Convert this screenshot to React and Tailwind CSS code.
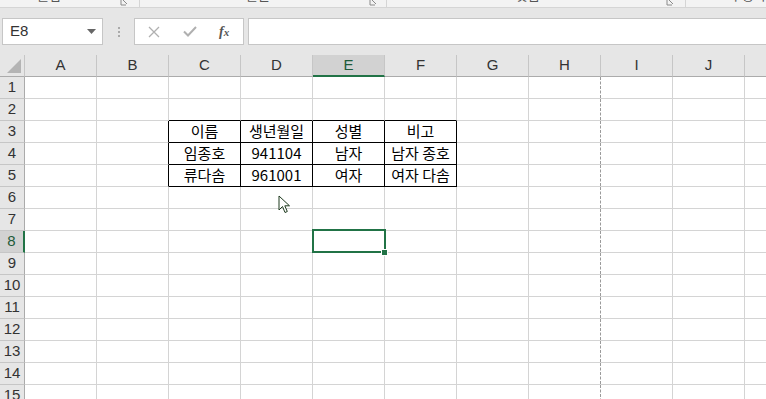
import React from "react";

const COLS = ["A", "B", "C", "D", "E", "F", "G", "H", "I", "J", "K"];
const ROWS = Array.from({ length: 15 }, (_, i) => i + 1);

const DATA = {
  3: { C: "이름", D: "생년월일", E: "성별", F: "비고" },
  4: { C: "임종호", D: "941104", E: "남자", F: "남자 종호" },
  5: { C: "류다솜", D: "961001", E: "여자", F: "여자 다솜" },
};

const TABLE_COLS = ["C", "D", "E", "F"];

const cellBorder = (col, row) => {
  const inTable = TABLE_COLS.includes(col) && row >= 3 && row <= 5;
  const right =
    col === "H"
      ? "border-r-0"
      : inTable || (col === "B" && row >= 3 && row <= 5)
      ? "border-r border-r-black"
      : "border-r border-r-[#d4d4d4]";
  const bottom =
    inTable || (TABLE_COLS.includes(col) && row === 2)
      ? "border-b-black"
      : "border-b-[#d4d4d4]";
  return `${right} ${bottom}`;
};

const Launcher = () => (
  <svg width="9" height="7" viewBox="0 0 9 7" className="shrink-0">
    <path d="M1 0v5h5" stroke="#8a8a8a" strokeWidth="1" fill="none" />
    <path d="M3 0l4 4" stroke="#8a8a8a" strokeWidth="1" />
  </svg>
);

const Cursor = () => (
  <svg
    width="14"
    height="20"
    viewBox="0 0 14 20"
    className="absolute left-[278px] top-[195px] pointer-events-none z-20"
  >
    <path
      d="M1 1 L1 15 L4.5 11.5 L7 17.5 L9.3 16.5 L6.8 10.8 L11.5 10.8 Z"
      fill="white"
      stroke="#1e3a1e"
      strokeWidth="1"
      strokeLinejoin="round"
    />
  </svg>
);

export default function App() {
  return (
    <div
      className="relative w-[766px] h-[399px] overflow-hidden bg-white select-none"
      style={{ fontFamily: "'Liberation Sans', 'Noto Sans CJK KR', sans-serif" }}
    >
      {/* ribbon bottom strip */}
      <div className="h-[8px] bg-[#f3f3f3] border-b border-[#d5d5d5] overflow-hidden flex items-start text-[13px] text-[#555]">
        <div className="w-[131px] shrink-0 flex items-start">
          <span className="ml-[37px] -mt-[12px] leading-[16px]">클립보드</span>
          <span className="ml-auto mr-[2px]">
            <Launcher />
          </span>
        </div>
        <div className="w-px h-[7px] bg-[#d5d5d5] ml-[8px]" />
        <div className="w-[238px] shrink-0 flex items-start">
          <span className="ml-[106px] -mt-[12px] leading-[16px]">글꼴</span>
          <span className="ml-auto">
            <Launcher />
          </span>
        </div>
        <div className="w-px h-[7px] bg-[#d5d5d5] ml-[8px]" />
        <div className="w-[288px] shrink-0 flex items-start">
          <span className="ml-[129px] -mt-[12px] leading-[16px]">맞춤</span>
          <span className="ml-auto">
            <Launcher />
          </span>
        </div>
        <div className="w-px h-[7px] bg-[#d5d5d5] ml-[10px]" />
        <span className="ml-[28px] -mt-[12px] leading-[16px] whitespace-nowrap">표시 형식</span>
      </div>

      {/* formula bar */}
      <div className="bg-[#e6e6e6] pt-[10px] pb-[10px] pl-[2px] flex items-center h-[47px]">
        <div className="w-[101px] h-[27px] bg-white border border-[#c6c6c6] flex items-center pl-[7px] pr-[6px] text-[15px] text-[#333]">
          <span>E8</span>
          <svg width="9" height="5" viewBox="0 0 9 5" className="ml-auto">
            <path d="M0 0h9L4.5 5z" fill="#666" />
          </svg>
        </div>
        <div className="w-[31px] flex flex-col items-center gap-[2px]">
          <span className="w-[2px] h-[2px] bg-[#aaa]" />
          <span className="w-[2px] h-[2px] bg-[#aaa]" />
          <span className="w-[2px] h-[2px] bg-[#aaa]" />
        </div>
        <div className="w-[110px] h-[27px] bg-white border border-[#c6c6c6] flex items-center">
          <svg width="12" height="12" viewBox="0 0 12 12" className="ml-[13px]">
            <path d="M1 1l10 10M11 1L1 11" stroke="#b0b0b0" strokeWidth="1.3" />
          </svg>
          <svg width="14" height="11" viewBox="0 0 14 11" className="ml-[23px]">
            <path d="M1 5.5l4 4L13 1" stroke="#b0b0b0" strokeWidth="2" fill="none" />
          </svg>
          <span
            className="ml-[22px] text-[14px] italic text-[#555] font-bold"
            style={{ fontFamily: "'Liberation Serif', serif" }}
          >
            f<span className="text-[11px]">x</span>
          </span>
        </div>
        <div className="ml-[4px] flex-1 h-[27px] bg-white border border-[#c6c6c6] border-r-0" />
      </div>

      {/* sheet */}
      <div className="relative">
        <div className="flex h-[22px] bg-[#e6e6e6]">
          <div className="w-[25px] shrink-0 border-r border-r-[#c6c6c6] border-b border-b-[#ababab] flex items-end justify-end p-[3px]">
            <svg width="14" height="14" viewBox="0 0 14 14">
              <path d="M14 0V14H0Z" fill="#b4b4b4" />
            </svg>
          </div>
          {COLS.map((c) => (
            <div
              key={c}
              className={`w-[72px] shrink-0 flex items-center justify-center text-[15px] border-r border-r-[#c6c6c6] ${
                c === "E"
                  ? "bg-[#d2d2d2] border-b-2 border-b-[#217346] text-[#1e5b3a]"
                  : "border-b border-b-[#ababab] text-[#333]"
              }`}
            >
              {c}
            </div>
          ))}
        </div>

        {ROWS.map((r) => (
          <div key={r} className="flex h-[22px]">
            <div
              className={`w-[25px] shrink-0 flex items-center justify-center text-[15px] border-b border-b-[#c6c6c6] ${
                r === 8
                  ? "bg-[#d2d2d2] border-r-2 border-r-[#217346] text-[#1e5b3a]"
                  : "bg-[#e6e6e6] border-r border-r-[#ababab] text-[#333]"
              }`}
            >
              {r}
            </div>
            {COLS.map((c) => (
              <div
                key={c}
                className={`relative w-[72px] shrink-0 border-b flex items-center text-[15px] text-black ${cellBorder(
                  c,
                  r
                )}`}
                style={
                  DATA[r]?.[c]
                    ? { fontFamily: "'Noto Sans CJK KR', sans-serif" }
                    : undefined
                }
              >
                <span className="flex-1 text-center whitespace-nowrap">{DATA[r]?.[c]}</span>
                {c === "H" && (
                  <span className="self-stretch w-0 border-l border-dashed border-[#9a9a9a]" />
                )}
                {c === "E" && r === 8 && (
                  <>
                    <div className="absolute z-10 -left-[1px] -top-[2px] -right-[2px] -bottom-[1px] border-2 border-[#217346]" />
                    <div className="absolute z-10 -right-[4px] -bottom-[4px] w-[7px] h-[7px] bg-[#217346] border border-white" />
                  </>
                )}
              </div>
            ))}
          </div>
        ))}
      </div>

      <Cursor />
    </div>
  );
}
